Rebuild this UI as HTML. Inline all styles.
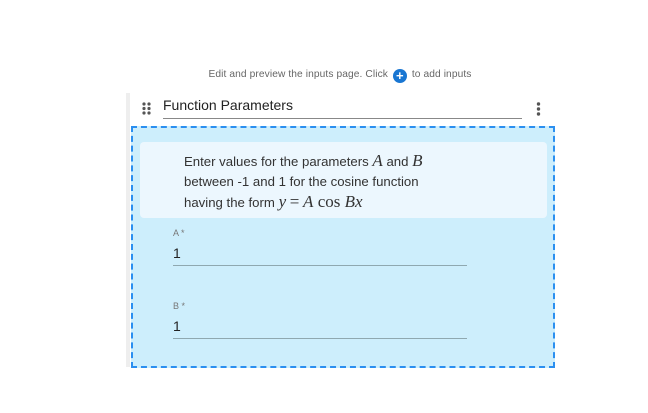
<!DOCTYPE html>
<html><head><style>
body{margin:0;width:648px;height:413px;background:#fff;font-family:"Liberation Sans",sans-serif;position:relative;overflow:hidden}
.a{position:absolute}
.m{font-family:"Liberation Serif",serif;font-style:italic;font-size:17px}
.r{font-family:"Liberation Serif",serif;font-size:17px}
</style></head><body>
<div class="a" style="left:0;width:680px;top:69px;text-align:center;font-size:10.2px;color:#666;letter-spacing:0.1px">Edit and preview the inputs page. Click <span style="display:inline-block;width:14px;height:14px;border-radius:50%;background:#1976d2;color:#fff;font-weight:bold;line-height:14px;font-size:13px;vertical-align:-3px;text-align:center;margin:0 2px">+</span> to add inputs</div>
<div class="a" style="left:126px;top:93px;width:4px;height:274px;background:#eee"></div>
<svg class="a" style="left:142px;top:102px" width="10" height="13"><g fill="#555"><circle cx="2" cy="2" r="1.6"/><circle cx="7" cy="2" r="1.6"/><circle cx="2" cy="6.5" r="1.6"/><circle cx="7" cy="6.5" r="1.6"/><circle cx="2" cy="11" r="1.6"/><circle cx="7" cy="11" r="1.6"/></g></svg>
<div class="a" style="left:163px;top:97px;font-size:14px;color:#222">Function Parameters</div>
<div class="a" style="left:163px;top:118px;width:359px;height:1px;background:#888"></div>
<svg class="a" style="left:536px;top:102px" width="5" height="14"><g fill="#555"><circle cx="2.5" cy="2" r="1.7"/><circle cx="2.5" cy="7" r="1.7"/><circle cx="2.5" cy="12" r="1.7"/></g></svg>
<div class="a" style="left:131px;top:126px;width:420px;height:238px;background:#cdeefc;border:2px dashed #2b8ff0"></div>
<div class="a" style="left:140px;top:142px;width:407px;height:76px;background:#ecf7fe;border-radius:4px"></div>
<div class="a" style="left:184px;top:151px;font-size:13.2px;color:#333;line-height:20px">Enter values for the parameters <span class="m">A</span> and <span class="m">B</span><br>between -1 and 1 for the cosine function<br>having the form <span class="m">y</span> <span class="r">=</span> <span class="m">A</span><span class="r"> cos </span><span class="m">Bx</span></div>
<div class="a" style="left:173px;top:228px;font-size:9px;color:#777">A *</div>
<div class="a" style="left:173px;top:245px;font-size:14px;color:#222">1</div>
<div class="a" style="left:173px;top:265px;width:294px;height:1px;background:#8fa8b0"></div>
<div class="a" style="left:173px;top:301px;font-size:9px;color:#777">B *</div>
<div class="a" style="left:173px;top:318px;font-size:14px;color:#222">1</div>
<div class="a" style="left:173px;top:338px;width:294px;height:1px;background:#8fa8b0"></div>
</body></html>
